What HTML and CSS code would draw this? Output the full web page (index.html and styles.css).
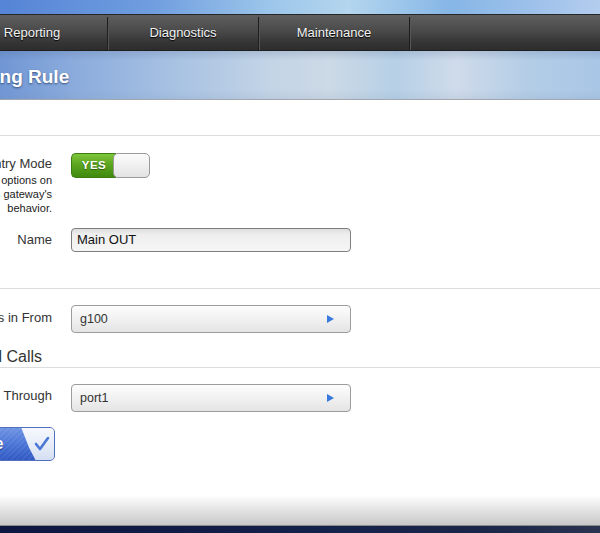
FILE: index.html
```html
<!DOCTYPE html>
<html>
<head>
<meta charset="utf-8">
<link rel="stylesheet" href="styles.css">
</head>
<body>
<div class="sky"></div>
<nav class="nav">
  <a class="nav-item">Reporting</a>
  <a class="nav-item">Diagnostics</a>
  <a class="nav-item">Maintenance</a>
  <a class="nav-item"></a>
</nav>
<header class="header">
  <h1 class="title">Routing Rule</h1>
</header>
<main class="main">
  <div class="form">
    <div class="intro"></div>
    <div class="row row-toggle">
      <div class="label">
        <div class="label-text">Entry Mode</div>
        <div class="desc">Advanced options on<br>this gateway's<br>behavior.</div>
      </div>
      <div class="field">
        <div class="toggle">
          <span class="toggle-on">YES</span>
          <span class="toggle-knob"></span>
        </div>
      </div>
    </div>
    <div class="row row-name">
      <div class="label"><div class="label-text">Name</div></div>
      <div class="field"><div class="input">Main OUT</div></div>
    </div>
    <div class="divider"></div>
    <div class="row row-select">
      <div class="label"><div class="label-text">Calls in From</div></div>
      <div class="field"><div class="select"><span>g100</span><span class="arrow"></span></div></div>
    </div>
    <h2 class="section-title">Route All Calls</h2>
    <div class="row row-select2">
      <div class="label"><div class="label-text">Send Call Through</div></div>
      <div class="field"><div class="select"><span>port1</span><span class="arrow"></span></div></div>
    </div>
    <div class="actions">
      <button class="save">
        <span class="save-text">Save</span>
        <span class="save-check">
          <svg width="33" height="34" viewBox="0 0 33 34"><polyline points="15,17 19,22 27,11" fill="none" stroke="#4a78d4" stroke-width="2.6" stroke-linecap="round" stroke-linejoin="round"/></svg>
        </span>
      </button>
    </div>
  </div>
</main>
<footer class="footer"></footer>
<div class="bottom-bar"></div>
</body>
</html>
```
FILE: styles.css
```css
html, body {
  margin: 0;
  padding: 0;
}
body {
  width: 600px;
  height: 533px;
  overflow: hidden;
  font-family: "Liberation Sans", Arial, sans-serif;
  background: #fff;
}
.sky {
  height: 14px;
  background: linear-gradient(90deg, #5684d6 0%, #6f9ddf 25%, #9cc6ea 45%, #b4d6ee 58%, #86b6e6 75%, #9cc0ea 88%, #b4cdee 100%);
}
.nav {
  display: flex;
  height: 35px;
  margin-left: -43px;
  border-top: 1px solid #262626;
  border-bottom: 1px solid #1f1f1f;
  background: linear-gradient(180deg, #5f5f5f 0%, #4a4a4a 45%, #343434 80%, #2d2d2d 100%);
}
.nav-item {
  flex: 0 0 150px;
  display: flex;
  align-items: center;
  justify-content: center;
  margin-top: 2px;
  border-right: 1px solid #1e1e1e;
  box-shadow: 1px 0 0 #565656;
  color: #f2f2f2;
  font-size: 13px;
  text-shadow: 0 1px 1px #000;
  padding-bottom: 2px;
}
.nav-item:last-child {
  border-right: none;
  box-shadow: none;
  flex: 1;
}
.header {
  height: 48px;
  border-bottom: 1px solid #a2a6ad;
  display: flex;
  align-items: center;
  background:
    linear-gradient(180deg, rgba(70, 90, 130, 0.18) 0%, rgba(255, 255, 255, 0) 20%, rgba(255, 255, 255, 0) 80%, rgba(120, 140, 170, 0.12) 100%),
    linear-gradient(90deg, #7096d4 0%, #8aabdc 12%, #a9c3e3 30%, #c3d4e6 45%, #ccd9e6 55%, #b6d0e6 66%, #cfdbea 76%, #b3cde6 88%, #a9c6e6 100%);
}
.title {
  margin: 0 0 0 -49px;
  padding-top: 4px;
  font-size: 19px;
  font-weight: bold;
  color: #fff;
  text-shadow: 0 1px 2px rgba(40, 60, 100, 0.8);
}
.main {
  padding-bottom: 34px;
}
.form {
  margin-left: -98px;
}
.intro {
  height: 35px;
  border-bottom: 1px solid #dcdcdc;
}
.row {
  display: flex;
  align-items: flex-start;
}
.label {
  width: 150px;
  flex: 0 0 150px;
  text-align: right;
  color: #333;
  font-size: 13px;
  line-height: 16px;
}
.field {
  margin-left: 19px;
  width: 280px;
}
.row-toggle {
  margin-top: 17px;
}
.row-toggle .label-text {
  padding-top: 3px;
}
.desc {
  margin-top: 1px;
  font-size: 11px;
  line-height: 14px;
  color: #222;
}
.toggle {
  display: flex;
  width: 79px;
  height: 25px;
}
.toggle-on {
  box-sizing: border-box;
  width: 45px;
  height: 25px;
  border: 1px solid #3b7d10;
  border-right: none;
  border-radius: 5px 0 0 5px;
  background: linear-gradient(180deg, #7ec63a 0%, #5ca620 45%, #3f8a0e 100%);
  color: #fff;
  font-size: 11.5px;
  font-weight: bold;
  letter-spacing: 0.5px;
  line-height: 23px;
  text-align: center;
  text-shadow: 0 1px 1px #2b5a08;
}
.toggle-knob {
  box-sizing: border-box;
  width: 37px;
  height: 25px;
  margin-left: -3px;
  border: 1px solid #9a9a9a;
  border-radius: 5px;
  background: linear-gradient(180deg, #fbfbfb 0%, #f0f0f0 50%, #e2e2e2 100%);
}
.row-name {
  margin-top: 13px;
}
.row-name .label-text {
  padding-top: 4px;
}
.input {
  box-sizing: border-box;
  height: 24px;
  width: 280px;
  border: 1px solid #7e7e7e;
  border-radius: 4px;
  background: linear-gradient(180deg, #dedede 0%, #eeeeee 25%, #f6f6f6 100%);
  padding-left: 5px;
  font-size: 13px;
  line-height: 22px;
  color: #111;
}
.divider {
  margin-top: 36px;
  border-top: 1px solid #dcdcdc;
}
.row-select {
  margin-top: 16px;
}
.row-select .label-text {
  padding-top: 5px;
}
.select {
  box-sizing: border-box;
  height: 28px;
  width: 280px;
  border: 1px solid #9c9c9c;
  border-radius: 4px;
  background: linear-gradient(180deg, #fdfdfd 0%, #f1f1f1 50%, #e4e4e4 100%);
  display: flex;
  align-items: center;
  justify-content: space-between;
  padding: 0 16px 0 8px;
  font-size: 12.5px;
  color: #333;
}
.arrow {
  width: 0;
  height: 0;
  border-left: 7px solid #3a7ade;
  border-top: 4px solid transparent;
  border-bottom: 4px solid transparent;
}
.section-title {
  margin: 14px 0 0 0;
  padding-left: 36px;
  font-size: 16px;
  font-weight: normal;
  line-height: 20px;
  color: #333;
  border-bottom: 1px solid #dcdcdc;
}
.row-select2 {
  margin-top: 16px;
}
.row-select2 .label-text {
  padding-top: 4px;
}
.actions {
  margin-top: 15px;
  padding-left: 48px;
}
.save {
  box-sizing: border-box;
  display: flex;
  align-items: center;
  width: 105px;
  height: 34px;
  padding: 0 0 0 15px;
  border: 1px solid #5070bd;
  border-radius: 5px;
  overflow: hidden;
  background:
    repeating-linear-gradient(135deg, rgba(255, 255, 255, 0.06) 0 2px, rgba(255, 255, 255, 0) 2px 4px),
    linear-gradient(180deg, #6d93e2 0%, #4a74d6 50%, #2f58c2 100%);
  font-family: "Liberation Sans", Arial, sans-serif;
  cursor: pointer;
}
.save-text {
  color: #fff;
  font-size: 16px;
  font-weight: bold;
  text-shadow: 0 1px 1px #1f3a80;
}
.save-check {
  margin-left: auto;
  width: 33px;
  height: 34px;
  flex: 0 0 33px;
  background: linear-gradient(180deg, #f7f9fd 0%, #e4ebf7 60%, #d2ddf1 100%);
  clip-path: polygon(0 0, 100% 0, 100% 100%, 15px 100%, 8px 60%);
}
.save-check svg {
  display: block;
}
.footer {
  height: 30px;
  border-bottom: 1px solid #8c8c8c;
  background: linear-gradient(180deg, #ffffff 0%, #e6e6e6 45%, #c8c8c8 100%);
}
.bottom-bar {
  height: 7px;
  background: linear-gradient(90deg, #0d1640 0%, #13204a 50%, #1a2648 80%, #2a3350 100%);
}
```
